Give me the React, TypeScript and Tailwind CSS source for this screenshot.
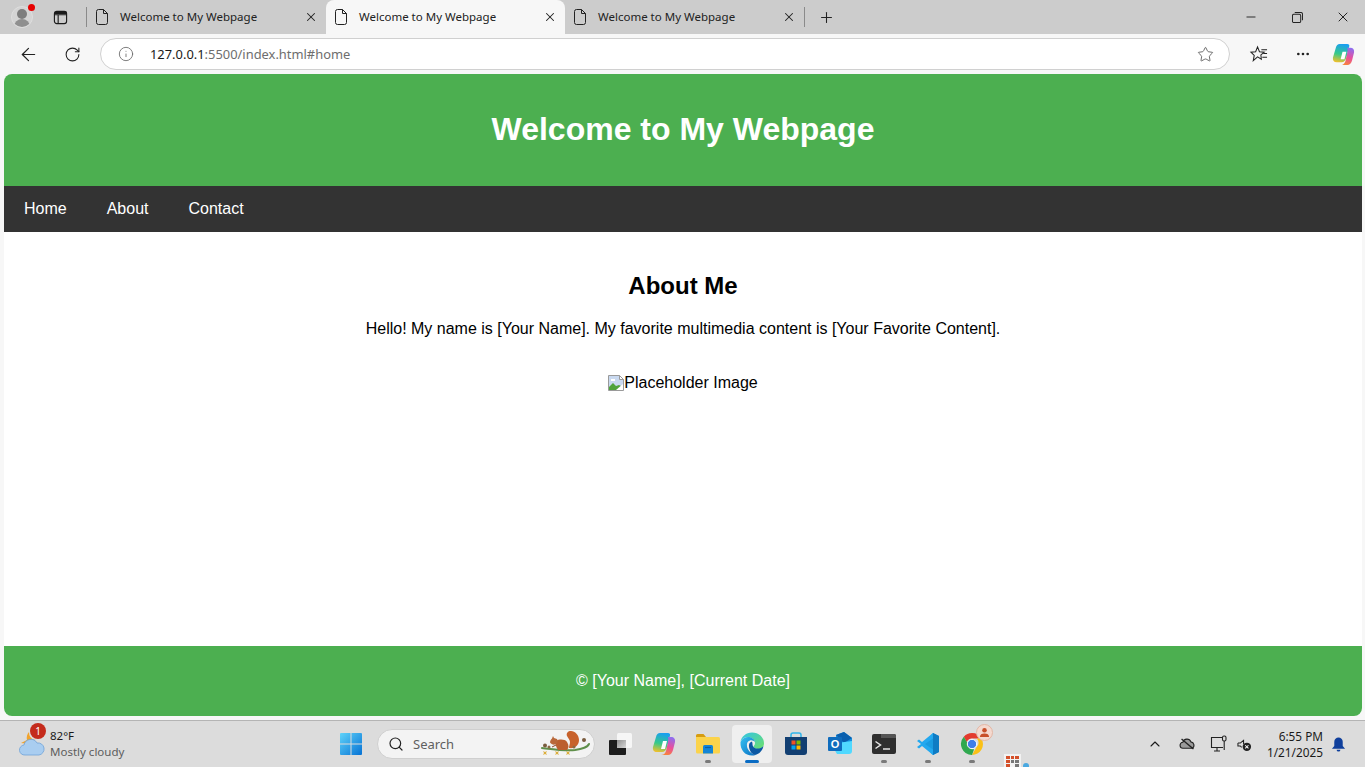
import { ArrowLeft, ChevronUp, Ellipsis, Info, Minus, Plus, RotateCw, Search, Star, X } from 'lucide-react'

const uiFont = "font-['Noto_Sans','Open_Sans',sans-serif]"

function PageIcon() {
  return (
    <svg viewBox="0 0 14 16" className="w-[14px] h-[16px] shrink-0" fill="none" stroke="#222" strokeWidth="1">
      <path d="M1.500 2.500a2 2 0 0 1 2-2h5l4 4v9a2 2 0 0 1-2 2h-7a2 2 0 0 1-2-2z" />
      <path d="M8.500 .5v4h4" />
    </svg>
  )
}

function Tab({ active }: { active?: boolean }) {
  return (
    <div className={`w-[239px] h-[34px] flex items-center pl-[8px] pr-[8px] ${active ? 'bg-[#f7f7f7] rounded-t-lg' : ''}`}>
      <PageIcon />
      <span className="ml-[11px] flex-1 text-[11.5px] text-[#222] whitespace-nowrap">Welcome to My Webpage</span>
      <X size={14} strokeWidth={1.8} className="text-[#222]" />
    </div>
  )
}

function CopilotIcon({ size }: { size: number }) {
  return (
    <svg viewBox="0 0 24 24" width={size} height={size}>
      <defs>
        <linearGradient id="cop-a" x1="0.5" y1="0" x2="0.3" y2="1">
          <stop offset="0" stopColor="#1a9ff0" />
          <stop offset="0.55" stopColor="#36c98a" />
          <stop offset="1" stopColor="#efc02c" />
        </linearGradient>
        <linearGradient id="cop-b" x1="0.7" y1="0" x2="0.4" y2="1">
          <stop offset="0" stopColor="#8d6ef0" />
          <stop offset="0.55" stopColor="#ea4f9b" />
          <stop offset="1" stopColor="#f7843a" />
        </linearGradient>
      </defs>
      <path d="M8 1h8c1.500 0 2.500 1 2 2.500L15 15c-.8 3-2.500 5-5 5H5c-3 0-4.500-2-4-5L4 5c.5-2.500 2-4 4-4z" fill="url(#cop-a)" />
      <path d="M16 5h3c3 0 4.500 2 4 5l-2 8c-.8 3-2.500 5-5 5H9c2 0 4-1 5-4l2-9c.3-1.500.5-3 0-5z" fill="url(#cop-b)" />
      <path d="M11 9h4l-2 8H9z" fill="#fff" />
    </svg>
  )
}

function WeatherIcon() {
  return (
    <svg viewBox="0 0 28 26" className="w-[28px] h-[26px]">
      <path d="M11 1a9 9 0 0 0-2 8l-6 3 8 1 6-4a8 8 0 0 1-6-8z" fill="#f2a32b" />
      <path d="M7 24a5 5 0 0 1-1-10 7 7 0 0 1 13-2 6 6 0 0 1 2 12z" fill="#a9cdf0" stroke="#6ea2d8" strokeWidth=".8" />
    </svg>
  )
}

function WindowsIcon() {
  return (
    <svg viewBox="0 0 24 24" className="w-[24px] h-[24px]">
      <defs>
        <linearGradient id="win" x1="0" y1="0" x2="1" y2="1">
          <stop offset="0" stopColor="#5fd3fa" />
          <stop offset="1" stopColor="#0672d4" />
        </linearGradient>
      </defs>
      <path d="M1 2a1 1 0 0 1 1-1h9.500v10.500H1zM12.500 1H22a1 1 0 0 1 1 1v9.500H12.500zM1 12.500h10.500V23H2a1 1 0 0 1-1-1zM12.500 12.500H23V22a1 1 0 0 1-1 1h-9.500z" fill="url(#win)" />
    </svg>
  )
}

function SquirrelArt() {
  return (
    <svg viewBox="0 0 52 30" className="w-[52px] h-[30px]">
      <path d="M2 19c9 1 24 3 33 2 6-1 12-2 14-6" fill="none" stroke="#5f8f4a" strokeWidth="2" strokeLinecap="round" />
      <path d="M29 19c6 1 10-3 10-8 0-5-4-9-8-9-3 0-5 2-4 5 1 2 3 4 3 6 0 2-1 4-1 6z" fill="#c8622c" />
      <path d="M16 12c3-2 9-2 11 1 2 3 2 6 0 8H18c-2-3-3-6-2-9z" fill="#bb5f30" />
      <path d="M13 7l1 2 3 1c1 2 1 5-2 5.500-2 .5-4-.5-5-2 0-2 1-3 2-4z" fill="#b9683a" />
      <path d="M16 16l-4 2" stroke="#8a4a28" strokeWidth="1" />
      <circle cx="5" cy="16.500" r="2" fill="#7a5c3e" />
      <circle cx="9" cy="18" r="1.500" fill="#8a6a45" />
      <circle cx="44" cy="11" r="2" fill="#7a5c3e" />
      <circle cx="34" cy="18" r="1.500" fill="#8a6a45" />
      <path d="M3 22l2 1 2-1-1 2 1 2-2-1-2 1 1-2zM15 22l2 1 2-1-1 2 1 2-2-1-2 1 1-2zM26 22l2 1 2-1-1 2 1 2-2-1-2 1 1-2z" fill="#dcae3c" />
    </svg>
  )
}

function TaskViewIcon() {
  return (
    <svg viewBox="0 0 24 24" className="w-[24px] h-[24px]">
      <defs>
        <linearGradient id="tv" x1="0" y1="0" x2="1" y2="1">
          <stop offset="0" stopColor="#8f8f8f" />
          <stop offset="1" stopColor="#d8d8d8" />
        </linearGradient>
      </defs>
      <rect x="9" y="1" width="15" height="15" rx="1.500" fill="#f6f6f6" />
      <rect x="1" y="8" width="17" height="15" rx="1" fill="#1c1c1c" />
      <path d="M9 8h9v8H9z" fill="url(#tv)" />
    </svg>
  )
}

function ExplorerIcon() {
  return (
    <svg viewBox="0 0 24 24" className="w-[24px] h-[24px]">
      <path d="M0 3.500A1.500 1.500 0 0 1 1.500 2h6l2.500 3h-10z" fill="#d69c12" />
      <path d="M0 5h22.500A1.500 1.500 0 0 1 24 6.500V20a1.500 1.500 0 0 1-1.500 1.500h-21A1.500 1.500 0 0 1 0 20z" fill="#fbd34b" />
      <path d="M7 14.500A1.500 1.500 0 0 1 8.500 13h7a1.500 1.500 0 0 1 1.500 1.500v7H7z" fill="#1485d6" />
      <path d="M9 15.500h6" stroke="#0b5ea6" strokeWidth="1.200" />
    </svg>
  )
}

function EdgeIcon() {
  return (
    <svg viewBox="0 0 24 24" className="w-[24px] h-[24px]">
      <defs>
        <linearGradient id="edge-a" x1="0" y1="0" x2="1" y2="1">
          <stop offset="0" stopColor="#35c1f1" />
          <stop offset="1" stopColor="#0a6fc2" />
        </linearGradient>
        <linearGradient id="edge-b" x1="0" y1="0" x2="1" y2="1">
          <stop offset="0" stopColor="#31c4e8" />
          <stop offset="1" stopColor="#6ee06a" />
        </linearGradient>
      </defs>
      <path d="M12 .5C18.500.5 24 5 24 11.500c0 3.500-3 5.500-6 5.500-2.500 0-4.500-1-4.500-2.500 0-.7 1.500-1.200 1.500-3.500C15 7.500 11.500 5 8 5 4.500 5 2 7 .5 9.500 1.500 4.500 6 .5 12 .5z" fill="url(#edge-b)" />
      <path d="M.5 10C2 6.500 5 5 8 5c3.500 0 6.500 2 7 5-1-1-3-2-5-1.500C7.500 9 6.500 11.500 7 14.500c.6 3.500 3.500 7 8.500 8.500-1 .5-2.300.6-3.500.6C5 23.600 0 18 .5 10z" fill="url(#edge-a)" />
      <path d="M9 15c-.5-3 .8-5 3-5.500 1 2.500 0 4 1.500 5.500 2 2 6.500 2.500 10-1-1 4.500-4 8-8.500 9-3.500-1-5.500-4.500-6-8z" fill="#0c59a4" />
    </svg>
  )
}

function StoreIcon() {
  return (
    <svg viewBox="0 0 24 24" className="w-[24px] h-[24px]">
      <path d="M7 5V3a2 2 0 0 1 2-2h6a2 2 0 0 1 2 2v2" fill="none" stroke="#2fb4ea" strokeWidth="1.500" />
      <path d="M1 5h22v15a3 3 0 0 1-3 3H4a3 3 0 0 1-3-3z" fill="#123f72" />
      <rect x="7.500" y="8.500" width="4" height="4" fill="#f25022" />
      <rect x="12.500" y="8.500" width="4" height="4" fill="#7fba00" />
      <rect x="7.500" y="13.500" width="4" height="4" fill="#00a4ef" />
      <rect x="12.500" y="13.500" width="4" height="4" fill="#ffb900" />
    </svg>
  )
}

function OutlookIcon() {
  return (
    <svg viewBox="0 0 24 24" className="w-[24px] h-[24px]">
      <path d="M8 3l8-3 8 6v11H8z" fill="#1490df" />
      <path d="M8 3l8-3 8 6-8 5z" fill="#0a5fae" />
      <path d="M6 17l3-6 15-2v10a3 3 0 0 1-3 3H9z" fill="#50d9ff" />
      <rect x="0" y="5" width="14" height="14" rx="1" fill="#0f6cbd" />
      <text x="7" y="16" textAnchor="middle" fontSize="11" fontWeight="700" fill="#fff" fontFamily="Liberation Sans, sans-serif">O</text>
    </svg>
  )
}

function TerminalIcon() {
  return (
    <svg viewBox="0 0 24 20" className="w-[24px] h-[20px]">
      <rect width="24" height="20" rx="2" fill="#2f2f2f" />
      <path d="M9 0h13a2 2 0 0 1 2 2v2H9z" fill="#555" />
      <path d="M3.500 7.500l5 3.500-5 3.500" fill="none" stroke="#e6e6e6" strokeWidth="1.500" />
      <path d="M11 15h7" stroke="#e6e6e6" strokeWidth="1.500" />
    </svg>
  )
}

function VsCodeIcon() {
  return (
    <svg viewBox="0 0 24 24" className="w-[24px] h-[24px]">
      <path d="M17 1l6 3v16l-6 3-10-10z" fill="#1a9be0" />
      <path d="M17 1v22l6-3V4z" fill="#0f7cc4" />
      <path d="M17 6.500L9 12l8 5.500v5.500L6 14l-3 2.500-2-1.500 4-3-4-3 2-1.500L6 10 17 1z" fill="#23a8ef" />
    </svg>
  )
}

function ChromeIcon() {
  return (
    <div className="relative w-[24px] h-[24px]">
      <svg viewBox="0 0 24 24" className="w-[24px] h-[24px]">
        <path d="M12 1a11 11 0 0 1 9.500 5.500H12a5.500 5.500 0 0 0-5.200 3.700L3.800 4.700A11 11 0 0 1 12 1z" fill="#e33b2e" />
        <path d="M21.500 6.500A11 11 0 0 1 12 23l4.700-8.200a5.500 5.500 0 0 0 0-8.300z" fill="#fbc116" />
        <path d="M12 23A11 11 0 0 1 3.800 4.700L8.500 13a5.500 5.500 0 0 0 5.600 4.300z" fill="#2fa84f" />
        <circle cx="12" cy="12" r="4.700" fill="#3f7ee8" stroke="#fff" strokeWidth="1" />
      </svg>
      <div className="absolute -top-[8px] -right-[9px] w-[17px] h-[17px] rounded-full bg-[#f4d9cf] border border-[#e3b7a5] flex items-center justify-center">
        <svg viewBox="0 0 12 12" className="w-[11px] h-[11px]" fill="#c8502a">
          <circle cx="6" cy="3.500" r="2.500" />
          <path d="M1 11c0-3 2-4 5-4s5 1 5 4z" />
        </svg>
      </div>
    </div>
  )
}

function TaskItem({ children, running, active }: { children: React.ReactNode; running?: boolean; active?: boolean }) {
  return (
    <div className={`relative w-[40px] h-[38px] mx-[2px] rounded flex items-center justify-center ${active ? 'bg-[#efefef]' : ''}`}>
      {children}
      {running && <span className="absolute bottom-0 left-1/2 -translate-x-1/2 w-[6px] h-[3px] rounded-full bg-[#7a7a7a]" />}
      {active && <span className="absolute bottom-0 left-1/2 -translate-x-1/2 w-[14px] h-[3px] rounded-full bg-[#0a6cc4]" />}
    </div>
  )
}

function BrowserChrome() {
  return (
    <>
      <div className="h-[34px] bg-[#cccccc] flex items-center">
        <div className="w-[44px] flex justify-center">
          <div className="relative w-[22px] h-[22px]">
            <div className="relative w-[22px] h-[22px] rounded-full bg-[#d4d4d4] border border-[#dedede] overflow-hidden">
              <span className="absolute left-[5px] top-[2px] w-[10px] h-[10px] rounded-full bg-[#7d7d7d]" />
              <span className="absolute left-[2px] top-[12px] w-[16px] h-[10px] rounded-t-full bg-[#8f8f8f]" />
            </div>
            <span className="absolute -top-[2px] -right-[2px] w-[7px] h-[7px] rounded-full bg-[#e60000]" />
          </div>
        </div>
        <div className="w-[32px] flex justify-center">
          <svg viewBox="0 0 16 16" className="w-[15px] h-[15px]" fill="none" stroke="#1a1a1a" strokeWidth="1.200">
            <rect x="1.500" y="1.500" width="13" height="13" rx="2.500" />
            <path d="M1.500 5h13M5.500 5v9.500" />
            <path d="M1.500 3h13" strokeWidth="2.500" />
          </svg>
        </div>
        <div className="ml-[10px] w-px h-[20px] bg-[#8a8a8a]" />
        <Tab />
        <Tab active />
        <Tab />
        <div className="w-px h-[20px] bg-[#8a8a8a]" />
        <div className="ml-[13px] text-[#222]"><Plus size={17} strokeWidth={1.5} /></div>
        <div className="flex-1" />
        <div className="flex items-center text-[#222]">
          <div className="w-[46px] flex justify-center"><Minus size={14} strokeWidth={1.6} /></div>
          <div className="w-[46px] flex justify-center">
            <svg viewBox="0 0 12 12" className="w-[11px] h-[11px]" fill="none" stroke="#222" strokeWidth="1.100">
              <rect x=".5" y="2.500" width="9" height="9" rx="1.500" />
              <path d="M3 .5h6.500a2 2 0 0 1 2 2V9" />
            </svg>
          </div>
          <div className="w-[45px] flex justify-center"><X size={16} strokeWidth={1.5} /></div>
        </div>
      </div>
      <div className="h-[40px] bg-[#f7f7f7] flex items-center">
        <div className="w-[56px] flex justify-center text-[#222]"><ArrowLeft size={21} strokeWidth={1.4} /></div>
        <div className="w-[32px] flex justify-center text-[#222]"><RotateCw size={17} strokeWidth={1.5} /></div>
        <div className="ml-[12px] w-[1130px] h-[32px] bg-white rounded-full border border-[#d0d0d0] flex items-center pl-[17px] pr-[15px]">
          <Info size={16} strokeWidth={1.3} className="text-[#6b6b6b]" />
          <span className="ml-[16px] pt-[1px] text-[12.9px] text-[#6e6e6e]"><span className="text-[#1a1a1a]">127.0.0.1</span>:5500/index.html#home</span>
          <div className="flex-1" />
          <Star size={17} strokeWidth={1.2} className="text-[#555]" />
        </div>
        <div className="flex-1 flex items-center justify-between pl-[19px] pr-[10px]">
          <svg viewBox="0 0 20 20" className="w-[19px] h-[19px]" fill="none" stroke="#222" strokeWidth="1.100">
            <path d="M9 2l2 5 5 .5-3.500 3 .5 4.500-4-2.500-4.500 4 1-5.500L2 7.500 7 7z" />
            <path d="M13 5h6M15 9h4M14 13h5" />
          </svg>
          <Ellipsis size={16} strokeWidth={2} className="text-[#222] ml-[11px]" />
          <div className="ml-[5px]"><CopilotIcon size={23} /></div>
        </div>
      </div>
    </>
  )
}

function BrokenImage() {
  return (
    <span className="inline-flex items-center text-black">
      <svg viewBox="0 0 16 16" className="w-[16px] h-[16px]">
        <path d="M.5.5h11l4 4v11H.5z" fill="#c9d9f0" stroke="#9a9a9a" />
        <path d="M11.500.5v4h4z" fill="#fff" stroke="#9a9a9a" />
        <path d="M1 15v-3l4-4 3 3 3-1 4 2v3z" fill="#4fa33b" />
        <path d="M8 15l7-6v6z" fill="#fff" />
        <path d="M3 4h4v2H3z" fill="#fff" />
      </svg>
      Placeholder Image
    </span>
  )
}

function Page() {
  return (
    <div className="flex-1 pl-[4px] pr-[3px] pb-[4px] bg-[#f7f7f7] flex min-h-0">
      <div className="flex-1 flex flex-col rounded-lg overflow-hidden bg-white font-['Liberation_Sans',Arial,sans-serif] text-base text-black">
        <header className="h-[112px] shrink-0 bg-[#4caf50] flex items-center justify-center pb-[3px]">
          <h1 className="text-[32px] font-bold text-white">Welcome to My Webpage</h1>
        </header>
        <nav className="h-[46px] shrink-0 bg-[#333333] flex items-center px-[20px] gap-[40px] text-white">
          <a>Home</a>
          <a>About</a>
          <a>Contact</a>
        </nav>
        <main className="flex-1 flex flex-col items-center pt-[40px]">
          <h2 className="text-2xl leading-[28px] font-bold">About Me</h2>
          <p className="mt-[20px] leading-[18px]">Hello! My name is [Your Name]. My favorite multimedia content is [Your Favorite Content].</p>
          <div className="mt-[36px] leading-[18px]"><BrokenImage /></div>
        </main>
        <footer className="h-[70px] shrink-0 bg-[#4caf50] flex items-center justify-center text-white">
          © [Your Name], [Current Date]
        </footer>
      </div>
    </div>
  )
}

function Taskbar() {
  return (
    <div className="relative h-[47px] shrink-0 bg-[#dcdcdc] border-t border-[#b4b4b4] flex items-center overflow-hidden">
      <div className="w-[331px] pl-[18px] flex items-center">
        <div className="relative">
          <WeatherIcon />
          <span className="absolute -top-[8px] left-[12px] w-[16px] h-[16px] rounded-full bg-[#c42b1c] text-white text-[10px] leading-[16px] text-center">1</span>
        </div>
        <div className="ml-[4px] text-[11.5px] leading-[16px]">
          <div className="text-[#1a1a1a]">82°F</div>
          <div className="text-[#5c5c5c]">Mostly cloudy</div>
        </div>
      </div>
      <div className="w-[40px] flex justify-center"><WindowsIcon /></div>
      <div className="ml-[6px] w-[218px] h-[30px] rounded-full bg-[#f3f3f3] border border-[#cfcfcf] flex items-center pl-[10px] pr-[2px]">
        <Search size={16} strokeWidth={1.8} className="text-[#222]" />
        <span className="ml-[9px] pt-[1px] flex-1 text-[13px] text-[#5f5f5f]">Search</span>
        <SquirrelArt />
      </div>
      <div className="ml-[3px] flex items-center">
        <TaskItem><TaskViewIcon /></TaskItem>
        <TaskItem><CopilotIcon size={24} /></TaskItem>
        <TaskItem running><ExplorerIcon /></TaskItem>
        <TaskItem active><EdgeIcon /></TaskItem>
        <TaskItem><StoreIcon /></TaskItem>
        <TaskItem><OutlookIcon /></TaskItem>
        <TaskItem running><TerminalIcon /></TaskItem>
        <TaskItem running><VsCodeIcon /></TaskItem>
        <TaskItem running><ChromeIcon /></TaskItem>
      </div>
      <div className="flex-1" />
      <div className="flex items-center pr-[19px] text-[#1a1a1a]">
        <ChevronUp size={16} strokeWidth={1.6} />
        <svg viewBox="0 0 20 16" className="ml-[16px] w-[17px] h-[14px]" fill="none" stroke="#222" strokeWidth="1.300">
          <path d="M5 13a3.500 3.500 0 0 1-.5-7A5 5 0 0 1 14 5.500a4 4 0 0 1 1.500 7.500z" fill="#9a9a9a" />
          <path d="M3 2l14 12" strokeWidth="1.600" />
        </svg>
        <svg viewBox="0 0 18 18" className="ml-[14px] w-[18px] h-[18px]" fill="none" stroke="#222" strokeWidth="1.100">
          <path d="M12 2.500H1.500v10H13M7 12.500v3M4 16h6" />
          <rect x="12.500" y="1" width="3.500" height="5" rx="1.500" />
          <path d="M14.200 6v9" />
        </svg>
        <svg viewBox="0 0 16 16" className="ml-[9px] w-[15px] h-[15px]" fill="none" stroke="#222" strokeWidth="1.100">
          <path d="M1 6.500h2.500L7 3.500v4M1 6.500v3h2.500L5 11" />
          <circle cx="10.500" cy="10.500" r="4.500" fill="#222" stroke="none" />
          <path d="M8.800 8.800l3.400 3.400M12.200 8.800l-3.400 3.400" stroke="#fff" />
        </svg>
        <div className="ml-[15px] text-[11.8px] leading-[16px] text-right">
          <div>6:55 PM</div>
          <div>1/21/2025</div>
        </div>
        <svg viewBox="0 0 16 16" className="ml-[8px] w-[15px] h-[16px]" fill="#0f3f9c">
          <path d="M8 1a4.500 4.500 0 0 1 4.500 4.500V10L15 13H1l2.500-3V5.500A4.500 4.500 0 0 1 8 1z" />
          <path d="M6 14h4a2 2 0 0 1-4 0z" />
        </svg>
      </div>
      {/* clipped icon peeking up from below the taskbar */}
      <div className="absolute left-[1004px] top-[33px] w-[17px] h-[14px] bg-[#f2f2f2] grid grid-cols-3 gap-px p-[2px] content-start">
        <span className="h-[3px] bg-[#d4502a]" /><span className="h-[3px] bg-[#d4502a]" /><span className="h-[3px] bg-[#d4502a]" />
        <span className="h-[3px] bg-[#d4502a]" /><span className="h-[3px] bg-[#777]" /><span className="h-[3px] bg-[#777]" />
        <span className="h-[3px] bg-[#d4502a]" /><span className="h-[3px]" /><span className="h-[3px] bg-[#777]" />
      </div>
      <span className="absolute left-[1023px] top-[42px] w-[6px] h-[6px] rounded-full bg-[#4aa8e0]" />
    </div>
  )
}

export default function App() {
  return (
    <div className={`w-full h-[767px] overflow-hidden flex flex-col ${uiFont}`}>
      <BrowserChrome />
      <Page />
      <Taskbar />
    </div>
  )
}
